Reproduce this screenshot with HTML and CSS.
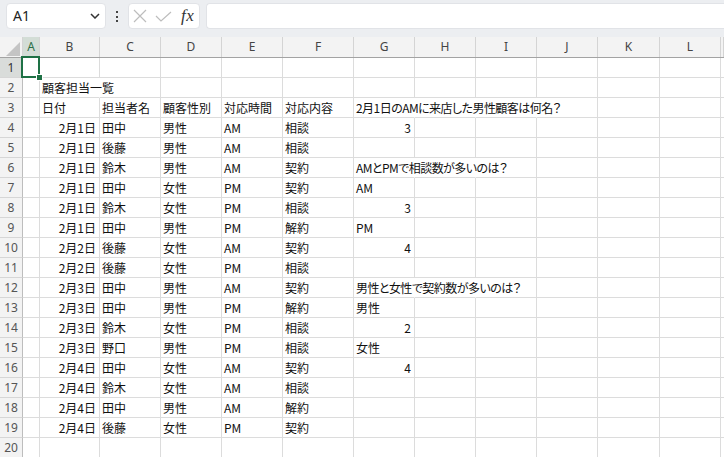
FILE: index.html
```html
<!DOCTYPE html>
<html lang="ja">
<head>
<meta charset="utf-8">
<title>顧客担当一覧</title>
<link rel="stylesheet" href="styles.css">
</head>
<body>
<div class="bar">
  <div class="namebox"><span>A1</span>
    <svg class="chev" width="10" height="6" viewBox="0 0 10 6"><polyline points="1,1 5,5 9,1" fill="none" stroke="#333" stroke-width="1.5"/></svg>
  </div>
  <div class="dots"><span></span><span></span><span></span></div>
  <div class="fxbox">
    <svg width="14" height="14" viewBox="0 0 14 14"><path d="M1 1 L13 13 M13 1 L1 13" stroke="#bdbdbd" stroke-width="1.2" fill="none"/></svg>
    <svg width="17" height="11" viewBox="0 0 17 11"><polyline points="1,5 6,10 16,1" stroke="#bdbdbd" stroke-width="1.2" fill="none"/></svg>
    <span class="fx">fx</span>
  </div>
  <div class="input"></div>
</div>
<div class="sheet">
  <div class="row head">
    <div class="corner"><svg width="14" height="14" viewBox="0 0 14 14"><polygon points="14,0 14,14 0,14" fill="#c4c4c4"/></svg></div>
    <div class="ch sel">A</div><div class="ch">B</div><div class="ch">C</div><div class="ch">D</div><div class="ch">E</div><div class="ch">F</div><div class="ch">G</div><div class="ch">H</div><div class="ch">I</div><div class="ch">J</div><div class="ch">K</div><div class="ch">L</div><div class="ch"></div>
  </div>
  <div class="row"><div class="rh sel">1</div><div class="c"></div><div class="c"></div><div class="c"></div><div class="c"></div><div class="c"></div><div class="c"></div><div class="c"></div><div class="c"></div><div class="c"></div><div class="c"></div><div class="c"></div><div class="c"></div><div class="c"></div></div>
  <div class="row"><div class="rh">2</div><div class="c"></div><div class="c ov">顧客担当一覧</div><div class="c"></div><div class="c"></div><div class="c"></div><div class="c"></div><div class="c"></div><div class="c"></div><div class="c"></div><div class="c"></div><div class="c"></div><div class="c"></div><div class="c"></div></div>
  <div class="row"><div class="rh">3</div><div class="c"></div><div class="c">日付</div><div class="c">担当者名</div><div class="c">顧客性別</div><div class="c">対応時間</div><div class="c">対応内容</div><div class="c ov q">2月1日のAMに来店した男性顧客は何名？</div><div class="c ov"></div><div class="c ov"></div><div class="c"></div><div class="c"></div><div class="c"></div><div class="c"></div></div>
  <div class="row"><div class="rh">4</div><div class="c"></div><div class="c r">2月1日</div><div class="c">田中</div><div class="c">男性</div><div class="c">AM</div><div class="c">相談</div><div class="c r">3</div><div class="c"></div><div class="c"></div><div class="c"></div><div class="c"></div><div class="c"></div><div class="c"></div></div>
  <div class="row"><div class="rh">5</div><div class="c"></div><div class="c r">2月1日</div><div class="c">後藤</div><div class="c">男性</div><div class="c">AM</div><div class="c">相談</div><div class="c"></div><div class="c"></div><div class="c"></div><div class="c"></div><div class="c"></div><div class="c"></div><div class="c"></div></div>
  <div class="row"><div class="rh">6</div><div class="c"></div><div class="c r">2月1日</div><div class="c">鈴木</div><div class="c">男性</div><div class="c">AM</div><div class="c">契約</div><div class="c ov q">AMとPMで相談数が多いのは？</div><div class="c ov"></div><div class="c"></div><div class="c"></div><div class="c"></div><div class="c"></div><div class="c"></div></div>
  <div class="row"><div class="rh">7</div><div class="c"></div><div class="c r">2月1日</div><div class="c">田中</div><div class="c">女性</div><div class="c">PM</div><div class="c">契約</div><div class="c">AM</div><div class="c"></div><div class="c"></div><div class="c"></div><div class="c"></div><div class="c"></div><div class="c"></div></div>
  <div class="row"><div class="rh">8</div><div class="c"></div><div class="c r">2月1日</div><div class="c">鈴木</div><div class="c">女性</div><div class="c">PM</div><div class="c">相談</div><div class="c r">3</div><div class="c"></div><div class="c"></div><div class="c"></div><div class="c"></div><div class="c"></div><div class="c"></div></div>
  <div class="row"><div class="rh">9</div><div class="c"></div><div class="c r">2月1日</div><div class="c">田中</div><div class="c">男性</div><div class="c">PM</div><div class="c">解約</div><div class="c">PM</div><div class="c"></div><div class="c"></div><div class="c"></div><div class="c"></div><div class="c"></div><div class="c"></div></div>
  <div class="row"><div class="rh">10</div><div class="c"></div><div class="c r">2月2日</div><div class="c">後藤</div><div class="c">女性</div><div class="c">AM</div><div class="c">契約</div><div class="c r">4</div><div class="c"></div><div class="c"></div><div class="c"></div><div class="c"></div><div class="c"></div><div class="c"></div></div>
  <div class="row"><div class="rh">11</div><div class="c"></div><div class="c r">2月2日</div><div class="c">後藤</div><div class="c">女性</div><div class="c">PM</div><div class="c">相談</div><div class="c"></div><div class="c"></div><div class="c"></div><div class="c"></div><div class="c"></div><div class="c"></div><div class="c"></div></div>
  <div class="row"><div class="rh">12</div><div class="c"></div><div class="c r">2月3日</div><div class="c">田中</div><div class="c">男性</div><div class="c">AM</div><div class="c">契約</div><div class="c ov q">男性と女性で契約数が多いのは？</div><div class="c ov"></div><div class="c"></div><div class="c"></div><div class="c"></div><div class="c"></div><div class="c"></div></div>
  <div class="row"><div class="rh">13</div><div class="c"></div><div class="c r">2月3日</div><div class="c">田中</div><div class="c">男性</div><div class="c">PM</div><div class="c">解約</div><div class="c">男性</div><div class="c"></div><div class="c"></div><div class="c"></div><div class="c"></div><div class="c"></div><div class="c"></div></div>
  <div class="row"><div class="rh">14</div><div class="c"></div><div class="c r">2月3日</div><div class="c">鈴木</div><div class="c">女性</div><div class="c">PM</div><div class="c">相談</div><div class="c r">2</div><div class="c"></div><div class="c"></div><div class="c"></div><div class="c"></div><div class="c"></div><div class="c"></div></div>
  <div class="row"><div class="rh">15</div><div class="c"></div><div class="c r">2月3日</div><div class="c">野口</div><div class="c">男性</div><div class="c">PM</div><div class="c">相談</div><div class="c">女性</div><div class="c"></div><div class="c"></div><div class="c"></div><div class="c"></div><div class="c"></div><div class="c"></div></div>
  <div class="row"><div class="rh">16</div><div class="c"></div><div class="c r">2月4日</div><div class="c">田中</div><div class="c">女性</div><div class="c">AM</div><div class="c">契約</div><div class="c r">4</div><div class="c"></div><div class="c"></div><div class="c"></div><div class="c"></div><div class="c"></div><div class="c"></div></div>
  <div class="row"><div class="rh">17</div><div class="c"></div><div class="c r">2月4日</div><div class="c">鈴木</div><div class="c">女性</div><div class="c">AM</div><div class="c">相談</div><div class="c"></div><div class="c"></div><div class="c"></div><div class="c"></div><div class="c"></div><div class="c"></div><div class="c"></div></div>
  <div class="row"><div class="rh">18</div><div class="c"></div><div class="c r">2月4日</div><div class="c">田中</div><div class="c">男性</div><div class="c">AM</div><div class="c">解約</div><div class="c"></div><div class="c"></div><div class="c"></div><div class="c"></div><div class="c"></div><div class="c"></div><div class="c"></div></div>
  <div class="row"><div class="rh">19</div><div class="c"></div><div class="c r">2月4日</div><div class="c">後藤</div><div class="c">女性</div><div class="c">PM</div><div class="c">契約</div><div class="c"></div><div class="c"></div><div class="c"></div><div class="c"></div><div class="c"></div><div class="c"></div><div class="c"></div></div>
  <div class="row"><div class="rh">20</div><div class="c"></div><div class="c"></div><div class="c"></div><div class="c"></div><div class="c"></div><div class="c"></div><div class="c"></div><div class="c"></div><div class="c"></div><div class="c"></div><div class="c"></div><div class="c"></div><div class="c"></div></div>
  <div class="active"><div class="handle"></div></div>
</div>
</body>
</html>
```

FILE: styles.css
```css
html, body {
  margin: 0;
  padding: 0;
}
body {
  width: 724px;
  height: 457px;
  overflow: hidden;
  background: #fff;
  font-family: "Noto Sans CJK JP", sans-serif;
}

/* formula bar */
.bar {
  display: flex;
  align-items: flex-start;
  height: 37px;
  box-sizing: border-box;
  padding: 3px 0 0 6px;
  background: #eceef1;
}
.namebox {
  width: 100px;
  height: 26px;
  box-sizing: border-box;
  background: #fff;
  border: 1px solid #e1e3e7;
  border-radius: 4px;
  display: flex;
  align-items: center;
  justify-content: space-between;
  padding: 0 5px 0 6px;
  font: 14px "Noto Sans", sans-serif;
  color: #222;
}
.namebox span {
  line-height: 24px;
}
.dots {
  width: 22px;
  height: 26px;
  display: flex;
  flex-direction: column;
  align-items: center;
  gap: 2.5px;
  padding-top: 8px;
  box-sizing: border-box;
}
.dots span {
  width: 2px;
  height: 2px;
  background: #444;
}
.fxbox {
  width: 72px;
  height: 26px;
  box-sizing: border-box;
  background: #fff;
  border: 1px solid #e1e3e7;
  border-radius: 4px;
  display: flex;
  align-items: center;
  padding-left: 4px;
  gap: 8px;
}
.fx {
  font: italic 17px "Liberation Serif", serif;
  color: #333;
  margin-left: 1px;
  letter-spacing: 0.5px;
}
.input {
  flex: 1;
  height: 26px;
  margin-left: 6px;
  box-sizing: border-box;
  background: #fff;
  border: 1px solid #e1e3e7;
  border-right: none;
  border-radius: 4px 0 0 4px;
}

/* sheet */
.sheet {
  position: relative;
  overflow: hidden;
}
.row {
  display: grid;
  grid-template-columns: 23px 17px 60px 61px 61px 61px 71px 61px 61px 61px 61px 62px 61px 3px;
  height: 20px;
}
.row.head {
  height: 21px;
  background: #f3f3f3;
  border-bottom: 1px solid #a3a3a3;
  box-sizing: border-box;
}
.corner {
  border-right: 1px solid #d4d4d4;
  display: flex;
  align-items: flex-end;
  justify-content: flex-end;
  padding: 0 2px 1px 0;
}
.ch {
  border-right: 1px solid #d4d4d4;
  text-align: center;
  font: 12px/20px "Noto Sans", sans-serif;
  color: #444;
}
.ch.sel {
  background: #d3ddd6;
  color: #2b6e46;
}
.rh {
  background: #f3f3f3;
  border-right: 1px solid #bdbdbd;
  border-bottom: 1px solid #d6d6d6;
  text-align: center;
  font: 12px/19px "Noto Sans", sans-serif;
  color: #555;
}
.rh.sel {
  background: #d9dcda;
  color: #333;
}
.c {
  border-right: 1px solid #dcdcdc;
  border-bottom: 1px solid #dcdcdc;
  font-size: 12px;
  line-height: 19px;
  color: #111;
  padding: 0 3px 0 2px;
  white-space: nowrap;
  overflow: hidden;
  font-feature-settings: "palt";
}
.c.r {
  text-align: right;
}
.c.ov {
  overflow: visible;
  border-right-color: transparent;
}
.c.q {
  letter-spacing: -0.55px;
}

.active {
  position: absolute;
  left: 21px;
  top: 19px;
  width: 19px;
  height: 22px;
  box-sizing: border-box;
  border: 2px solid #1e7145;
}
.handle {
  position: absolute;
  left: 13px;
  top: 16px;
  width: 5px;
  height: 5px;
  background: #1e7145;
  border: 1px solid #fff;
}
```
